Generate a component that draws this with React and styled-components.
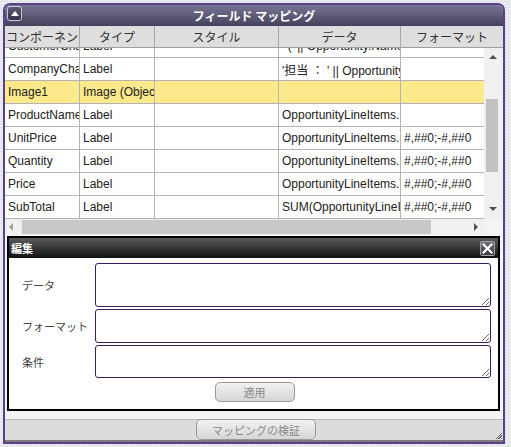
import React from "react";
import styled, { createGlobalStyle } from "styled-components";

const Global = createGlobalStyle`
  html, body { margin: 0; padding: 0; }
  body {
    width: 511px; height: 447px; overflow: hidden;
    background-color: #ebebf2;
    background-image: radial-gradient(#d2d2de 0.8px, transparent 0.9px);
    background-size: 3px 3px;
    font-family: "Noto Sans", "Noto Sans CJK JP", sans-serif;
  }
`;

const Window = styled.div`
  margin: 3px 0 0 3px;
  width: 498px;
  border: 2px solid #5a3e8a;
  border-radius: 7px 7px 0 0;
  background: #f4f4f4;
  display: flex;
  flex-direction: column;
  overflow: hidden;
`;

const TitleBar = styled.div`
  height: 21px;
  display: flex;
  align-items: center;
  position: relative;
  background: linear-gradient(#787694, #43415a);
  color: #fff;
  font-family: "Noto Sans CJK JP", sans-serif;
  font-weight: 700;
  font-size: 12px;
  justify-content: center;
`;

const CollapseBtn = styled.div`
  position: absolute;
  left: 2px;
  top: 1px;
  width: 13px;
  height: 13px;
  border: 1px solid #c8c8d4;
  border-radius: 3px;
  background: linear-gradient(#5b5a72, #34334a);
  display: flex;
  align-items: center;
  justify-content: center;
  &::after {
    content: "";
    border-left: 4px solid transparent;
    border-right: 4px solid transparent;
    border-bottom: 5px solid #fff;
    margin-top: -1px;
  }
`;

const HeaderRow = styled.div`
  display: flex;
  height: 22px;
  background: #dedede;
  border-bottom: 1px solid #a0a0a0;
  box-sizing: border-box;
`;

const HeadCell = styled.div`
  width: ${(p) => p.$w}px;
  flex: ${(p) => (p.$grow ? 1 : "none")};
  box-sizing: border-box;
  border-right: ${(p) => (p.$grow ? "none" : "1px solid #a8a8a8")};
  font-family: "Noto Sans CJK JP", sans-serif;
  font-size: 12px;
  color: #333;
  display: flex;
  align-items: center;
  justify-content: ${(p) => (p.$left ? "flex-start" : "center")};
  padding-left: ${(p) => (p.$left ? "1px" : "0")};
  white-space: nowrap;
  overflow: hidden;
`;

const BodyWrap = styled.div`
  display: flex;
  height: 171px;
`;

const Viewport = styled.div`
  width: 479px;
  overflow: hidden;
  background: #fff;
`;

const Row = styled.div`
  display: flex;
  height: 23px;
  box-sizing: border-box;
  border-bottom: 1px solid #b4b4b4;
  background: ${(p) => (p.$sel ? "#fbe98b" : "#fff")};
  margin-top: ${(p) => (p.$clip ? "-13px" : "0")};
`;

const Cell = styled.div`
  width: ${(p) => p.$w}px;
  flex: none;
  box-sizing: border-box;
  border-right: ${(p) => (p.$last ? "none" : "1px solid #b4b4b4")};
  padding-left: 3px;
  font-family: "Liberation Sans", "Noto Sans CJK JP", sans-serif;
  font-size: 12px;
  color: #222;
  display: flex;
  align-items: center;
  white-space: nowrap;
  overflow: hidden;
`;

const VScroll = styled.div`
  width: 19px;
  background: #f0f0f0;
  position: relative;
`;

const Arrow = styled.div`
  position: absolute;
  width: 0;
  height: 0;
  ${(p) =>
    p.$dir === "up"
      ? `top: 7px; left: 5px; border-left: 4px solid transparent; border-right: 4px solid transparent; border-bottom: 4px solid #505050;`
      : p.$dir === "down"
      ? `bottom: 8px; left: 5px; border-left: 4px solid transparent; border-right: 4px solid transparent; border-top: 4px solid #505050;`
      : p.$dir === "left"
      ? `top: 4px; left: 4px; border-top: 4px solid transparent; border-bottom: 4px solid transparent; border-right: 4px solid #a0a0a0;`
      : `top: 4px; right: 6px; border-top: 4px solid transparent; border-bottom: 4px solid transparent; border-left: 4px solid #505050;`}
`;

const VThumb = styled.div`
  position: absolute;
  left: 2px;
  top: 51px;
  width: 12px;
  height: 73px;
  background: #c1c1c1;
`;

const HScrollRow = styled.div`
  display: flex;
  height: 16px;
  margin-bottom: 1px;
`;

const HScroll = styled.div`
  width: 479px;
  background: #f0f0f0;
  position: relative;
`;

const HThumb = styled.div`
  position: absolute;
  left: 17px;
  top: 1px;
  width: 409px;
  height: 14px;
  background: #c8c8c8;
`;

const Corner = styled.div`
  flex: 1;
  background: #f4f4f4;
`;

const Panel = styled.div`
  margin: 0 3px 0 2px;
  border: 2px solid #000;
  background: #fff;
  display: flex;
  flex-direction: column;
`;

const PanelTitle = styled.div`
  height: 20px;
  background: linear-gradient(#5c5c5c, #111);
  display: flex;
  align-items: center;
  justify-content: space-between;
  padding: 0 3px 0 2px;
  color: #fff;
  font-family: "Noto Sans CJK JP", sans-serif;
  font-weight: 700;
  font-size: 11px;
`;

const CloseBtn = styled.div`
  width: 13px;
  height: 13px;
  border: 1px solid #a4a4ac;
  border-radius: 2px;
  background: linear-gradient(#6e6e78, #3c3c44);
  display: flex;
  align-items: center;
  justify-content: center;
`;

const Form = styled.div`
  display: grid;
  grid-template-columns: 86px 396px;
  grid-template-rows: 44px 34px 33px;
  row-gap: 2px;
  padding: 5px 0 0 0;
`;

const Label = styled.div`
  font-family: "Noto Sans CJK JP", sans-serif;
  font-size: 11px;
  color: #444;
  display: flex;
  align-items: center;
  padding-left: 13px;
`;

const Area = styled.textarea`
  box-sizing: border-box;
  width: 100%;
  height: 100%;
  margin: 0;
  border: 1px solid #3d1c5e;
  border-radius: 3px;
  background: #fff;
  resize: both;
  outline: none;
  font-size: 12px;
`;

const ButtonRow = styled.div`
  display: flex;
  justify-content: center;
  padding: 4px 0 7px 2px;
`;

const Btn = styled.button`
  width: ${(p) => p.$w}px;
  height: ${(p) => p.$h}px;
  margin: 0;
  padding: 0;
  border: 1px solid #9a9a9a;
  border-radius: 5px;
  background: linear-gradient(#f2f2f2, #d6d6d6);
  color: #8a8a8a;
  font-family: "Noto Sans CJK JP", sans-serif;
  font-size: 11px;
`;

const Footer = styled.div`
  margin-top: 8px;
  box-sizing: border-box;
  border-top: 1px solid #b8b8b8;
  border-bottom: 2px solid #7c7c7c;
  background: #dcdcdc;
  display: flex;
  justify-content: center;
  align-items: flex-start;
  position: relative;
  height: 23px;
`;

const FooterBtn = styled(Btn)`
  margin-top: -1px;
  margin-left: 4px;
`;

const Grip = styled.div`
  position: absolute;
  right: 1px;
  bottom: 1px;
  width: 7px;
  height: 7px;
  background: repeating-linear-gradient(135deg, transparent 0 1px, #666 1px 2px);
  clip-path: polygon(100% 0, 100% 100%, 0 100%);
`;

const cols = [75, 75, 124, 122, 83];

const rows = [
  { c: ["CustomerCha", "Label", "", "' (' || Opportunity.Name || ')'", ""], clip: true },
  { c: ["CompanyCha", "Label", "", "'担当 ： ' || Opportunity", ""] },
  { c: ["Image1", "Image (Object)", "", "", ""], sel: true },
  { c: ["ProductName", "Label", "", "OpportunityLineItems.", ""] },
  { c: ["UnitPrice", "Label", "", "OpportunityLineItems.", "#,##0;-#,##0"] },
  { c: ["Quantity", "Label", "", "OpportunityLineItems.", "#,##0;-#,##0"] },
  { c: ["Price", "Label", "", "OpportunityLineItems.T", "#,##0;-#,##0"] },
  { c: ["SubTotal", "Label", "", "SUM(OpportunityLineIt", "#,##0;-#,##0"] },
];

export default function App() {
  return (
    <>
      <Global />
      <Window>
        <TitleBar>
          <CollapseBtn />
          フィールド マッピング
        </TitleBar>
        <HeaderRow>
          <HeadCell $w={75} $left>コンポーネン</HeadCell>
          <HeadCell $w={75}>タイプ</HeadCell>
          <HeadCell $w={124}>スタイル</HeadCell>
          <HeadCell $w={122}>データ</HeadCell>
          <HeadCell $grow>フォーマット</HeadCell>
        </HeaderRow>
        <BodyWrap>
          <Viewport>
            {rows.map((r, i) => (
              <Row key={i} $sel={r.sel} $clip={r.clip}>
                {r.c.map((t, j) => (
                  <Cell key={j} $w={cols[j]} $last={j === 4}>
                    {t}
                  </Cell>
                ))}
              </Row>
            ))}
          </Viewport>
          <VScroll>
            <Arrow $dir="up" />
            <VThumb />
            <Arrow $dir="down" />
          </VScroll>
        </BodyWrap>
        <HScrollRow>
          <HScroll>
            <Arrow $dir="left" />
            <HThumb />
            <Arrow $dir="right" />
          </HScroll>
          <Corner />
        </HScrollRow>
        <Panel>
          <PanelTitle>
            編集
            <CloseBtn>
              <svg width="11" height="11" viewBox="0 0 11 11">
                <path d="M1.5 1.5 L9.5 9.5 M9.5 1.5 L1.5 9.5" stroke="#fff" strokeWidth="2.2" strokeLinecap="square" />
              </svg>
            </CloseBtn>
          </PanelTitle>
          <Form>
            <Label>データ</Label>
            <Area />
            <Label>フォーマット</Label>
            <Area />
            <Label>条件</Label>
            <Area />
          </Form>
          <ButtonRow>
            <Btn $w={80} $h={20}>適用</Btn>
          </ButtonRow>
        </Panel>
        <Footer>
          <FooterBtn $w={120} $h={21}>マッピングの検証</FooterBtn>
          <Grip />
        </Footer>
      </Window>
    </>
  );
}
